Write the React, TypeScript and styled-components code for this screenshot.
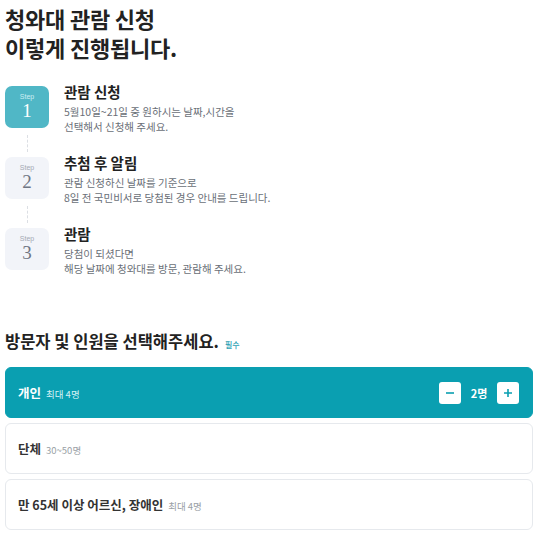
import styled, { createGlobalStyle } from "styled-components";

const GlobalStyle = createGlobalStyle`
  body {
    margin: 0;
    background: #ffffff;
    font-family: "Noto Sans CJK KR", "Noto Sans", sans-serif;
    color: #222;
  }
`;

const Page = styled.div`
  width: 538px;
  padding: 4px 5px 0;
  box-sizing: border-box;
`;

const Title = styled.h1`
  margin: 0;
  font-size: 22px;
  line-height: 29px;
  font-weight: 700;
  color: #222;
  letter-spacing: -0.2px;
`;

const StepList = styled.ol`
  list-style: none;
  margin: 24px 0 0;
  padding: 0;
`;

const StepItem = styled.li<{ $last?: boolean }>`
  display: grid;
  grid-template-columns: 44px 1fr;
  column-gap: 15px;
  height: ${(p) => (p.$last ? "auto" : "71px")};
`;

const Rail = styled.div`
  display: flex;
  flex-direction: column;
  align-items: center;
`;

const Badge = styled.div<{ $active?: boolean }>`
  width: 44px;
  height: 42px;
  border-radius: 7px;
  background: ${(p) => (p.$active ? "#50b7c6" : "#f2f4f9")};
  color: ${(p) => (p.$active ? "#ffffff" : "#6f7684")};
  display: flex;
  flex-direction: column;
  align-items: center;
  justify-content: center;
  flex-shrink: 0;
`;

const BadgeLabel = styled.span<{ $active?: boolean }>`
  font-family: "Liberation Sans", sans-serif;
  font-size: 7px;
  line-height: 8px;
  color: ${(p) => (p.$active ? "#cdeef2" : "#a4a9b3")};
`;

const BadgeNumber = styled.span`
  font-family: "Liberation Serif", serif;
  font-size: 19px;
  line-height: 20px;
`;

const Connector = styled.div`
  width: 0;
  height: 17px;
  margin-top: 7px;
  border-left: 1px dashed #dcdfe4;
`;

const StepText = styled.div`
  margin-top: -4px;
`;

const StepTitle = styled.div`
  font-size: 14.5px;
  line-height: 20px;
  font-weight: 700;
  color: #222;
`;

const StepDesc = styled.p`
  margin: 2px 0 0;
  font-size: 10.5px;
  line-height: 15px;
  color: #6a6f77;
`;

const SectionHeading = styled.h2`
  margin: 53px 0 0;
  font-size: 16.5px;
  line-height: 24px;
  font-weight: 700;
  color: #222;
  display: flex;
  align-items: baseline;
  gap: 6px;
`;

const Required = styled.span`
  font-size: 8px;
  font-weight: 500;
  color: #2b9fb3;
`;

const Options = styled.div`
  margin-top: 10px;
  display: flex;
  flex-direction: column;
  gap: 5px;
`;

const OptionCard = styled.div<{ $selected?: boolean }>`
  height: 51px;
  box-sizing: border-box;
  border-radius: 6px;
  padding: 0 13px 0 12px;
  display: flex;
  align-items: center;
  justify-content: space-between;
  background: ${(p) => (p.$selected ? "#0a9fb1" : "#ffffff")};
  border: 1px solid ${(p) => (p.$selected ? "#0a9fb1" : "#e6e9ed")};
  color: ${(p) => (p.$selected ? "#ffffff" : "#333")};
`;

const OptionLabel = styled.div`
  display: flex;
  align-items: baseline;
  gap: 5px;
`;

const OptionName = styled.span`
  font-size: 12.5px;
  font-weight: 700;
`;

const OptionNote = styled.span<{ $selected?: boolean }>`
  font-size: 9.5px;
  color: ${(p) => (p.$selected ? "#d4f1f5" : "#9a9fa6")};
`;

const Counter = styled.div`
  display: flex;
  align-items: center;
  gap: 9px;
`;

const CountButton = styled.button`
  width: 22px;
  height: 22px;
  padding: 0;
  border: none;
  border-radius: 3px;
  background: #ffffff;
  color: #0a9fb1;
  display: flex;
  align-items: center;
  justify-content: center;
  cursor: pointer;
`;

const Count = styled.span`
  font-size: 11px;
  font-weight: 700;
  color: #ffffff;
  min-width: 18px;
  text-align: center;
`;

const steps = [
  {
    title: "관람 신청",
    lines: ["5월10일~21일 중 원하시는 날짜,시간을", "선택해서 신청해 주세요."],
  },
  {
    title: "추첨 후 알림",
    lines: ["관람 신청하신 날짜를 기준으로", "8일 전 국민비서로 당첨된 경우 안내를 드립니다."],
  },
  {
    title: "관람",
    lines: ["당첨이 되셨다면", "해당 날짜에 청와대를 방문, 관람해 주세요."],
  },
];

const Minus = () => (
  <svg width="12" height="12" viewBox="0 0 12 12">
    <path d="M2 6h8" stroke="currentColor" strokeWidth="1.6" />
  </svg>
);

const Plus = () => (
  <svg width="12" height="12" viewBox="0 0 12 12">
    <path d="M2 6h8M6 2v8" stroke="currentColor" strokeWidth="1.6" />
  </svg>
);

export default function App() {
  return (
    <Page>
      <GlobalStyle />
      <Title>
        청와대 관람 신청
        <br />
        이렇게 진행됩니다.
      </Title>

      <StepList>
        {steps.map((s, i) => {
          const last = i === steps.length - 1;
          return (
            <StepItem key={s.title} $last={last}>
              <Rail>
                <Badge $active={i === 0}>
                  <BadgeLabel $active={i === 0}>Step</BadgeLabel>
                  <BadgeNumber>{i + 1}</BadgeNumber>
                </Badge>
                {!last && <Connector />}
              </Rail>
              <StepText>
                <StepTitle>{s.title}</StepTitle>
                <StepDesc>
                  {s.lines[0]}
                  <br />
                  {s.lines[1]}
                </StepDesc>
              </StepText>
            </StepItem>
          );
        })}
      </StepList>

      <SectionHeading>
        방문자 및 인원을 선택해주세요.
        <Required>필수</Required>
      </SectionHeading>

      <Options>
        <OptionCard $selected>
          <OptionLabel>
            <OptionName>개인</OptionName>
            <OptionNote $selected>최대 4명</OptionNote>
          </OptionLabel>
          <Counter>
            <CountButton aria-label="감소">
              <Minus />
            </CountButton>
            <Count>2명</Count>
            <CountButton aria-label="증가">
              <Plus />
            </CountButton>
          </Counter>
        </OptionCard>
        <OptionCard>
          <OptionLabel>
            <OptionName>단체</OptionName>
            <OptionNote>30~50명</OptionNote>
          </OptionLabel>
        </OptionCard>
        <OptionCard>
          <OptionLabel>
            <OptionName>만 65세 이상 어르신, 장애인</OptionName>
            <OptionNote>최대 4명</OptionNote>
          </OptionLabel>
        </OptionCard>
      </Options>
    </Page>
  );
}
